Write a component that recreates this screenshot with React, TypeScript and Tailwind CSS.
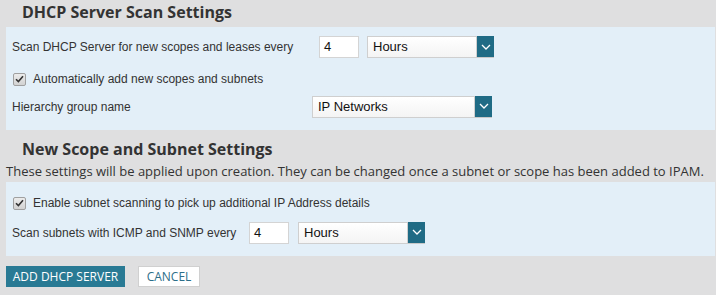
import React from "react";

const sans = { fontFamily: '"Liberation Sans", Arial, sans-serif' };

function Chevron() {
  return (
    <svg width="10" height="6" viewBox="0 0 10 6" fill="none">
      <path d="M1 1 L5 5 L9 1" stroke="#ffffff" strokeWidth="1.3" />
    </svg>
  );
}

function Select({ value, width }: { value: string; width: number }) {
  return (
    <div className="flex h-[22px]" style={{ width }}>
      <div className="flex-1 flex items-center pl-[5px] border border-[#cfcfcf] bg-gradient-to-b from-white to-[#f4f4f4] text-[13px] text-[#111]">
        {value}
      </div>
      <div className="w-[17px] bg-[#1f6b85] flex items-center justify-center border-b border-[#c8c8c8]">
        <Chevron />
      </div>
    </div>
  );
}

function NumInput({ value }: { value: string }) {
  return (
    <div className="w-[40px] h-[22px] bg-white border border-[#d4d4d4] flex items-center pl-[4px] text-[13px] text-[#111]">
      {value}
    </div>
  );
}

function Check() {
  return (
    <div className="w-[13px] h-[13px] rounded-[2px] border border-[#a0a0a0] bg-gradient-to-b from-[#ececec] to-[#d2d2d2] flex items-center justify-center">
      <svg width="9" height="8" viewBox="0 0 9 8">
        <path d="M1 4.2 L3.4 6.6 L8 1.2" stroke="#333" strokeWidth="1.6" fill="none" />
      </svg>
    </div>
  );
}

export default function App() {
  return (
    <div className="w-[716px] h-[295px] bg-[#dfdfe0] overflow-hidden text-[#333]" style={sans}>
      <div
        className="h-[27px] pl-[22px] pt-[1px] text-[16px] font-bold text-[#333] leading-[22px]"
        style={{ fontFamily: '"Open Sans", sans-serif' }}
      >
        DHCP Server Scan Settings
      </div>
      <div className="ml-[6px] mr-[1px] h-[103px] bg-[#e3eff8] pt-[9px] pl-[6px] text-[12px]">
        <div className="flex items-center h-[22px]">
          <div className="w-[307px]">Scan DHCP Server for new scopes and leases every</div>
          <NumInput value="4" />
          <div className="w-[8px]" />
          <Select value="Hours" width={127} />
        </div>
        <div className="flex items-center h-[22px] mt-[10px] pl-[1px]">
          <Check />
          <span className="ml-[7px]">Automatically add new scopes and subnets</span>
        </div>
        <div className="flex items-center h-[21px] mt-[6px]">
          <div className="w-[300px]">Hierarchy group name</div>
          <Select value="IP Networks" width={180} />
        </div>
      </div>
      <div style={{ fontFamily: '"Open Sans", sans-serif' }}>
        <div className="h-[32px] pl-[22px] pt-[8px] text-[16px] font-bold leading-[22px]">
          New Scope and Subnet Settings
        </div>
        <div className="h-[20px] pl-[6px] text-[13px] leading-[18px] text-[#333]">
          These settings will be applied upon creation. They can be changed once a subnet or scope has been added to IPAM.
        </div>
      </div>
      <div className="ml-[6px] mr-[1px] h-[74px] bg-[#e3eff8] pt-[12px] pl-[6px] text-[12px]">
        <div className="flex items-center h-[18px] pl-[1px]">
          <Check />
          <span className="ml-[7px]">Enable subnet scanning to pick up additional IP Address details</span>
        </div>
        <div className="flex items-center h-[21px] mt-[10px]">
          <div className="w-[237px]">Scan subnets with ICMP and SNMP every</div>
          <NumInput value="4" />
          <div className="w-[9px]" />
          <Select value="Hours" width={127} />
        </div>
      </div>
      <div className="flex mt-[10px] ml-[6px] gap-[13px]" style={{ fontFamily: '"Open Sans", sans-serif' }}>
        <div className="w-[119px] h-[21px] bg-[#297a94] text-white text-[12px] flex items-center justify-center">
          ADD DHCP SERVER
        </div>
        <div className="w-[62px] h-[21px] bg-white border border-[#d0d0d0] text-[#2c6e89] text-[12px] flex items-center justify-center">
          CANCEL
        </div>
      </div>
    </div>
  );
}
